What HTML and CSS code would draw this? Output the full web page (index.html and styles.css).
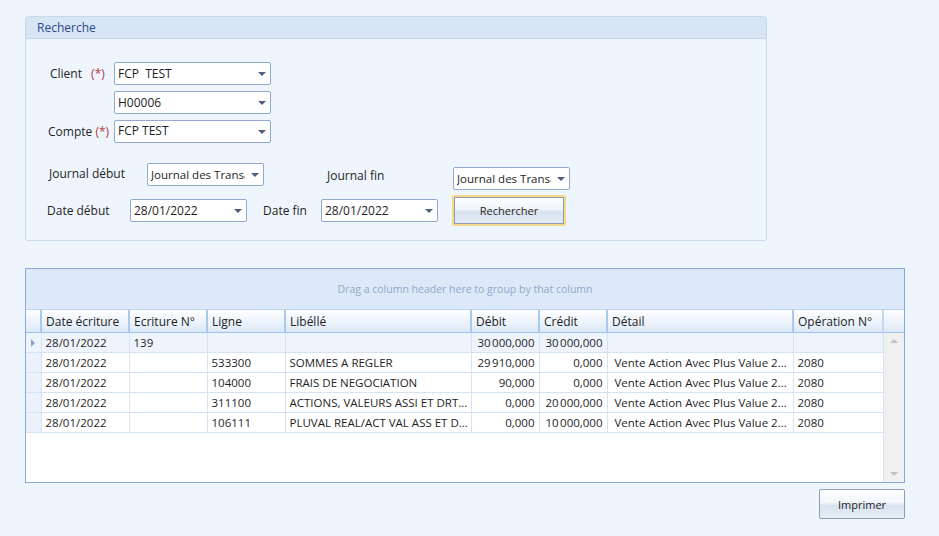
FILE: index.html
```html
<!DOCTYPE html>
<html lang="fr">

<head>
    <meta charset="UTF-8">
    <meta name="viewport" content="width=device-width, initial-scale=1.0">
    <title>Journal des transactions</title>
    <link rel="stylesheet" href="styles.css">
</head>

<body>
    <div class="page">
        <!-- Zone de recherche -->
        <div class="search-box">
            <div class="search-title">Recherche</div>
            <div class="search-body">
                <div class="row">
                    <div class="lbl lbl-client">Client <span class="req">(*)</span></div>
                    <div class="combo combo-wide"><span>FCP&nbsp; TEST</span><i class="arrow"></i></div>
                </div>
                <div class="row row-tight">
                    <div class="lbl lbl-client"></div>
                    <div class="combo combo-wide"><span>H00006</span><i class="arrow"></i></div>
                </div>
                <div class="row row-tight">
                    <div class="lbl lbl-compte">Compte <span class="req">(*)</span></div>
                    <div class="combo combo-wide combo-top"><span>FCP TEST</span><i class="arrow"></i></div>
                </div>
                <div class="row row-journal">
                    <div class="lbl lbl-jdebut">Journal début</div>
                    <div class="combo combo-small"><span>Journal des Transactions</span><i class="arrow"></i></div>
                    <div class="lbl lbl-jfin">Journal fin</div>
                    <div class="combo combo-small combo-jfin"><span>Journal des Transactions</span><i class="arrow"></i></div>
                </div>
                <div class="row row-date">
                    <div class="lbl lbl-ddebut">Date début</div>
                    <div class="combo combo-date"><span>28/01/2022</span><i class="arrow"></i></div>
                    <div class="lbl lbl-dfin">Date fin</div>
                    <div class="combo combo-date"><span>28/01/2022</span><i class="arrow"></i></div>
                    <button class="btn btn-search">Rechercher</button>
                </div>
            </div>
        </div>

        <!-- Grille des écritures -->
        <div class="grid">
            <div class="group-panel">Drag a column header here to group by that column</div>
            <table class="grid-head">
                <colgroup>
                    <col style="width: 15px">
                    <col style="width: 88px">
                    <col style="width: 78px">
                    <col style="width: 78px">
                    <col style="width: 186px">
                    <col style="width: 68px">
                    <col style="width: 68px">
                    <col style="width: 186px">
                    <col style="width: 90px">
                    <col style="width: 21px">
                </colgroup>
                <tr>
                    <th></th>
                    <th>Date écriture</th>
                    <th>Ecriture N°</th>
                    <th>Ligne</th>
                    <th>Libéllé</th>
                    <th>Débit</th>
                    <th>Crédit</th>
                    <th>Détail</th>
                    <th>Opération N°</th>
                    <th class="filler"></th>
                </tr>
            </table>
            <div class="grid-body">
                <div class="rows">
                    <table class="grid-data">
                        <colgroup>
                            <col style="width: 15px">
                            <col style="width: 88px">
                            <col style="width: 78px">
                            <col style="width: 78px">
                            <col style="width: 186px">
                            <col style="width: 68px">
                            <col style="width: 68px">
                            <col style="width: 186px">
                            <col style="width: 90px">
                        </colgroup>
                        <tr class="current">
                            <td class="ind"><i class="ind-arrow"></i></td>
                            <td>28/01/2022</td>
                            <td>139</td>
                            <td></td>
                            <td></td>
                            <td class="num">30&#8239;000,000</td>
                            <td class="num">30&#8239;000,000</td>
                            <td class="detail"></td>
                            <td></td>
                        </tr>
                        <tr>
                            <td class="ind"></td>
                            <td>28/01/2022</td>
                            <td></td>
                            <td>533300</td>
                            <td>SOMMES A REGLER</td>
                            <td class="num">29&#8239;910,000</td>
                            <td class="num">0,000</td>
                            <td class="detail">Vente Action Avec Plus Value 2...</td>
                            <td>2080</td>
                        </tr>
                        <tr>
                            <td class="ind"></td>
                            <td>28/01/2022</td>
                            <td></td>
                            <td>104000</td>
                            <td>FRAIS DE NEGOCIATION</td>
                            <td class="num">90,000</td>
                            <td class="num">0,000</td>
                            <td class="detail">Vente Action Avec Plus Value 2...</td>
                            <td>2080</td>
                        </tr>
                        <tr>
                            <td class="ind"></td>
                            <td>28/01/2022</td>
                            <td></td>
                            <td>311100</td>
                            <td>ACTIONS, VALEURS ASSI ET DRT...</td>
                            <td class="num">0,000</td>
                            <td class="num">20&#8239;000,000</td>
                            <td class="detail">Vente Action Avec Plus Value 2...</td>
                            <td>2080</td>
                        </tr>
                        <tr>
                            <td class="ind"></td>
                            <td>28/01/2022</td>
                            <td></td>
                            <td>106111</td>
                            <td>PLUVAL REAL/ACT VAL ASS ET D...</td>
                            <td class="num">0,000</td>
                            <td class="num">10&#8239;000,000</td>
                            <td class="detail">Vente Action Avec Plus Value 2...</td>
                            <td>2080</td>
                        </tr>
                    </table>
                </div>
                <div class="scrollbar">
                    <i class="sb-up"></i>
                    <i class="sb-down"></i>
                </div>
            </div>
        </div>

        <div class="actions">
            <button class="btn btn-print">Imprimer</button>
        </div>
    </div>
</body>

</html>
```

FILE: styles.css
```css
body {
    margin: 0;
    background: #eef5fd;
    font-family: "Open Sans", "Noto Sans", sans-serif;
    font-size: 11px;
    color: #1e1e1e;
}

.page {
    width: 880px;
    padding: 16px 0 0 25px;
}

/* Recherche */
.search-box {
    width: 740px;
    height: 223px;
    border: 1px solid #c9d9ec;
    border-radius: 3px;
    background: #eef5fd;
}

.search-title {
    height: 21px;
    line-height: 21px;
    padding-left: 11px;
    background: #d7e5f5;
    border-bottom: 1px solid #c9d9ec;
    color: #2b4a8c;
    font-size: 12px;
}

.search-body {
    padding-top: 23px;
}

.row {
    display: flex;
    align-items: center;
}

.row-tight {
    margin-top: 6px;
}

.lbl {
    box-sizing: border-box;
    font-size: 12px;
}

.lbl-client {
    width: 88px;
    padding-left: 24px;
}

.lbl-compte {
    width: 88px;
    padding-left: 22px;
}

.req {
    color: #b23a3a;
    margin-left: 6px;
}

.lbl-compte .req {
    margin-left: 0;
}

.combo {
    box-sizing: border-box;
    position: relative;
    height: 23px;
    line-height: 21px;
    border: 1px solid #8fa9cf;
    border-radius: 2px;
    background: #fff;
    padding: 0 18px 0 3px;
    font-size: 12px;
    white-space: nowrap;
    overflow: hidden;
}

.combo span {
    display: block;
    overflow: hidden;
}

.combo-top {
    line-height: 19px;
}

.arrow {
    position: absolute;
    right: 4px;
    top: 9px;
    border-left: 4px solid transparent;
    border-right: 4px solid transparent;
    border-top: 4px solid #4e5f80;
}

.combo-wide {
    width: 157px;
}

.row-journal {
    margin-top: 20px;
    align-items: flex-start;
}

.lbl-jdebut {
    width: 121px;
    padding-left: 23px;
    line-height: 22px;
}

.combo-small {
    width: 117px;
    height: 23px;
    font-size: 11.5px;
}

.lbl-jfin {
    width: 189px;
    padding-left: 63px;
    padding-top: 4px;
    line-height: 18px;
}

.combo-jfin {
    margin-top: 4px;
}

.row-date {
    margin-top: 5px;
}

.lbl-ddebut {
    width: 104px;
    padding-left: 21px;
}

.combo-date {
    width: 117px;
}

.lbl-dfin {
    width: 74px;
    padding-left: 16px;
}

.btn {
    box-sizing: border-box;
    font-family: "Open Sans", "Noto Sans", sans-serif;
    font-size: 11px;
    color: #1e1e1e;
    border: 1px solid #8e9db4;
    border-radius: 2px;
    background: linear-gradient(to bottom, #ffffff 0%, #f1f5fa 45%, #d9e3ef 55%, #e6edf6 100%);
    cursor: pointer;
}

.btn-search {
    width: 114px;
    height: 31px;
    margin-left: 14px;
    border: 2px solid #f2d98e;
    box-shadow: inset 0 0 0 1px #8e9db4;
}

/* Grille */
.grid {
    margin-top: 27px;
    width: 878px;
    border: 1px solid #86aade;
    background: #fff;
}

.group-panel {
    height: 40px;
    line-height: 40px;
    text-align: center;
    background: #dde9f9;
    color: #8fa8c8;
    font-size: 10.5px;
    border-bottom: 1px solid #bcd2ee;
}

table {
    border-collapse: collapse;
    table-layout: fixed;
}

.grid-head {
    width: 878px;
    background: linear-gradient(to bottom, #ffffff, #dbe8f8);
    border-bottom: 1px solid #9fc0ea;
}

.grid-head th {
    height: 22px;
    padding: 0 0 0 4px;
    font-weight: normal;
    text-align: left;
    font-size: 12px;
    border-left: 2px solid #a9c9ef;
    white-space: nowrap;
    overflow: hidden;
}

.grid-head th:first-child {
    border-left: none;
}

.grid-head th.filler {
    border-left: 2px solid #c3d7f0;
}

.grid-body {
    display: flex;
    height: 149px;
}

.rows {
    width: 857px;
    border-right: 1px solid #d5e3f4;
}

.grid-data {
    width: 857px;
}

.grid-data td {
    height: 19px;
    padding: 0 4px;
    font-size: 11.5px;
    border: 1px solid #d5e3f4;
    white-space: nowrap;
    overflow: hidden;
}

.grid-data tr:first-child td {
    border-top: none;
}

.grid-data td:first-child {
    border-left: none;
}

.grid-data td.num {
    text-align: right;
}

.grid-data td.detail {
    padding-left: 7px;
}

.grid-data tr.current td {
    background: #eef4fc;
}

.grid-data td.ind {
    background: #eaf1fa;
    padding: 0;
}

.ind-arrow {
    display: block;
    margin-left: 5px;
    border-top: 4px solid transparent;
    border-bottom: 4px solid transparent;
    border-left: 4px solid #8aa6cc;
    width: 0;
}

.scrollbar {
    width: 20px;
    background: #f0f0f0;
    display: flex;
    flex-direction: column;
    justify-content: space-between;
    align-items: center;
    padding: 6px 0;
    box-sizing: border-box;
}

.sb-up {
    border-left: 4px solid transparent;
    border-right: 4px solid transparent;
    border-bottom: 4px solid #c2c2c2;
}

.sb-down {
    border-left: 4px solid transparent;
    border-right: 4px solid transparent;
    border-top: 4px solid #c2c2c2;
}

.actions {
    display: flex;
    justify-content: flex-end;
    margin-top: 6px;
}

.btn-print {
    width: 86px;
    height: 30px;
}
```
